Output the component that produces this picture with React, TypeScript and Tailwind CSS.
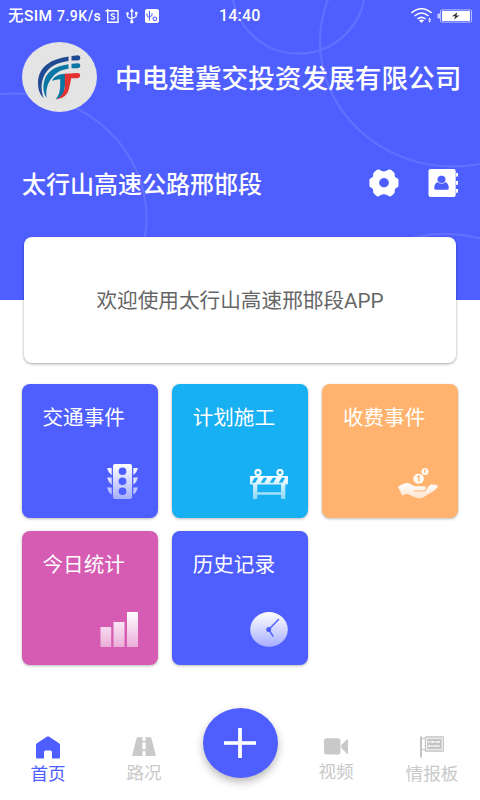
import React from 'react';

function HeaderRings() {
  return (
    <svg className="absolute inset-0" width="480" height="300" viewBox="0 0 480 300" fill="none" stroke="#6270ff" strokeWidth="2.3">
      <ellipse cx="298.5" cy="-12" rx="66.5" ry="65.5" />
      <ellipse cx="453" cy="42" rx="133" ry="124.5" />
      <ellipse cx="13.5" cy="218" rx="133" ry="124.5" />
      <ellipse cx="445" cy="358.5" rx="133" ry="124.5" />
    </svg>
  );
}

function StatusBar() {
  return (
    <div className="relative flex h-8 items-center text-white">
      <div className="flex h-8 w-[219px] items-center pl-2 font-[Roboto,'Noto_Sans_CJK_SC',sans-serif] font-medium">
        <span className="w-[49px] whitespace-nowrap pt-px text-[15.5px] tracking-[0.4px]">无SIM</span>
        <span className="w-[48px] whitespace-nowrap text-[14px] tracking-[0.5px]">7.9K/s</span>
        <svg width="56" height="16" viewBox="105 7 56 16" fill="none" stroke="#fff">
          <path d="M105.5 9.7H118V21.3H107.7V8" strokeWidth="1.4" />
          <path d="M114.9 13.6C114.4 12.5 111 12.4 111 14.1C111 15.8 114.9 14.8 114.9 16.8C114.9 18.6 111.4 18.5 110.8 17.2" strokeWidth="1.2" />
          <path d="M131.8 9.5V20M127.5 12.5V15.3Q127.5 16.5 131.8 18M136.2 12V15Q136.2 16.3 131.8 17.2" strokeWidth="1.3" />
          <path d="M129.8 10.8L131.8 7.3L133.8 10.8Z" fill="#fff" stroke="none" />
          <circle cx="131.8" cy="20.8" r="1.7" fill="#fff" stroke="none" />
          <circle cx="127.5" cy="12.6" r="1.3" fill="#fff" stroke="none" />
          <path d="M135 10.8h2.5v2.5h-2.5z" fill="#fff" stroke="none" />
          <rect x="145" y="8" width="14" height="14" rx="2" fill="#fff" stroke="none" />
          <path d="M149.5 10V19.5M147 12.5V15L149.5 16.8M152 12.2V14.5L149.5 15.8" stroke="#4e5eff" strokeWidth="1" />
          <circle cx="154.8" cy="17.8" r="1.8" stroke="#4e5eff" strokeWidth="1.1" />
        </svg>
      </div>
      <span className="w-[191px] font-[Roboto,sans-serif] text-[16px] font-medium tracking-[0.2px]">14:40</span>
      <svg width="62" height="18" viewBox="410 6 62 18" fill="none">
        <g stroke="#fff" strokeWidth="1.6">
          <path d="M411.4 11.8Q421.5 3.7 431.6 11.8" />
          <path d="M414.5 15Q421.5 9 428.5 15" />
          <path d="M417.5 18Q421.5 14.6 425.5 18" />
        </g>
        <path d="M418.9 19.2Q421.5 17.6 424.1 19.2L421.5 22Z" fill="#fff" />
        <path d="M428.2 18.8L429.6 16.6L431 18.8ZM428.2 19.6L429.6 21.8L431 19.6Z" fill="#fff" />
        <rect x="437.5" y="12.5" width="3" height="5" rx="1" fill="#c9ceff" />
        <rect x="440.5" y="8.9" width="31" height="12.2" rx="1.2" stroke="#bcc2ff" strokeWidth="1" />
        <rect x="442" y="10" width="28" height="10" fill="#fff" />
        <path d="M457.5 11.3L452 15.3H455.3L454 18.4L459.5 14.4H456.3Z" fill="#333" />
      </svg>
    </div>
  );
}

function Logo() {
  return (
    <svg width="75" height="70" viewBox="22 42 75 70" className="shrink-0">
      <ellipse cx="59.5" cy="77" rx="37.5" ry="35" fill="#e4e4e5" />
      <path d="M68.5 56.5C50 59 40 67 38.2 79C37.3 88 39.5 94 43.6 98.2C40.5 89 41 81 45 74C49.5 66.7 57 62.5 68.5 61Z" fill="#204a91" />
      <path d="M71.5 56L78 55.3Q80.3 55.4 80.3 57.7Q80.3 60.4 77.5 60.5H71.5Z" fill="#204a91" />
      <path d="M68.5 64.3C54 66 46.5 73 44.5 80C42.5 87 43.3 93 46.5 98C45.8 90 47.2 84 51 79C55 73 60.5 69.7 68.5 68.7Z" fill="#0b76a4" />
      <path d="M71.5 63.8L78 63.2Q80.3 63.4 80.3 65.3Q80.3 68 77.5 68.2H71.5Z" fill="#0b76a4" />
      <path d="M65.5 73.7C59 74 54.5 75.6 52 80.8Q56 79.3 60.2 79.3V86C60 92 58.5 96 55.5 99.5Q61 98 64 93L66.5 73.7Z" fill="#0b76a4" />
      <path d="M64.8 73.7L77.5 73Q80.2 73.2 80.2 75.7Q80 78 77.2 78.3H71.3L68.8 89.5Q66.8 97.8 56.5 99.6C61.3 97.2 64 92.5 64.9 87Z" fill="#e33232" />
    </svg>
  );
}

function GearIcon() {
  return (
    <svg width="30" height="28" viewBox="0 0 30 28">
      <path fillRule="evenodd" fill="#fff" d="M7.6 1.1Q8.6 .3 9.7 .6L12 1.6Q14.9 3.3 17.8 1.6L20.1 .6Q21.3 .3 22.3 1.1L25 3.4Q26 4.3 25.6 5.6Q25.4 7.9 27.6 9L28.7 9.5Q29.5 10 29.5 11V16.6Q29.5 17.7 28.6 18.2L27.4 18.8Q25.3 20 25.7 22.2Q26 23.6 25 24.5L22.4 26.9Q21.4 27.7 20.2 27.2L18 26.1Q14.9 24.5 11.9 26.1L9.7 27.2Q8.5 27.7 7.5 26.9L4.9 24.5Q3.9 23.6 4.2 22.2Q4.6 20 2.5 18.8L1.3 18.2Q.4 17.7 .4 16.6V11Q.4 10 1.2 9.5L2.3 9Q4.5 7.9 4.3 5.6Q3.9 4.3 4.9 3.4ZM15 9.1A4.9 4.7 0 1 0 15 18.5A4.9 4.7 0 1 0 15 9.1Z" />
    </svg>
  );
}

function ContactIcon() {
  return (
    <svg width="30" height="28" viewBox="0 0 30 28">
      <rect x=".5" y="0" width="27.2" height="28" rx="2" fill="#fff" />
      <path d="M28 4h2v3.5h-2zM28 12h2v3.7h-2zM28 20h2v3.7h-2z" fill="#fff" />
      <path d="M8 20.8Q5.9 20.8 6.2 18.8Q6.7 13.7 9.6 13.2Q13.5 15.8 17.4 13.2Q20.3 13.7 20.8 18.8Q21.1 20.8 19 20.8Z" fill="#4e5eff" />
      <ellipse cx="13.5" cy="10.4" rx="4.3" ry="4" fill="#4e5eff" stroke="#fff" strokeWidth=".5" />
    </svg>
  );
}

function Fade({ id, end }: { id: string; end: number }) {
  return (
    <defs>
      <linearGradient id={id} x1="0" y1="0" x2="0" y2="1">
        <stop offset="0" stopColor="#fff" />
        <stop offset="1" stopColor="#fff" stopOpacity={end} />
      </linearGradient>
    </defs>
  );
}

function TrafficIcon() {
  return (
    <svg width="31" height="35" viewBox="0 0 31 35" fill="url(#traffic)">
      <Fade id="traffic" end={0.5} />
      <path fillRule="evenodd" d="M8 0H23Q25 0 25 2V33Q25 35 23 35H8Q6 35 6 33V2Q6 0 8 0ZM15.5 3.5A3.9 3.8 0 1 0 15.5 11.1A3.9 3.8 0 1 0 15.5 3.5ZM15.5 13.5A3.9 3.8 0 1 0 15.5 21.1A3.9 3.8 0 1 0 15.5 13.5ZM15.5 23.4A3.9 3.8 0 1 0 15.5 31A3.9 3.8 0 1 0 15.5 23.4Z" />
      <g fill="#fff">
        <path d="M0 4H4.7V11.3Q1.4 9 0 4ZM31 4H26.3V11.3Q29.6 9 31 4Z" opacity=".94" />
        <path d="M0 13.5H4.7V20.8Q1.4 18.5 0 13.5ZM31 13.5H26.3V20.8Q29.6 18.5 31 13.5Z" opacity=".8" />
        <path d="M0 23.5H4.7V30.8Q1.4 28.5 0 23.5ZM31 23.5H26.3V30.8Q29.6 28.5 31 23.5Z" opacity=".64" />
      </g>
    </svg>
  );
}

function BarrierIcon() {
  return (
    <svg width="38" height="30" viewBox="0 0 38 30">
      <Fade id="barrier" end={0.5} />
      <circle cx="8" cy="3.5" r="2.6" fill="none" stroke="#fff" strokeWidth="2" />
      <circle cx="30" cy="3.5" r="2.6" fill="none" stroke="#fff" strokeWidth="2" />
      <path fill="url(#barrier)" fillRule="evenodd" d="M1 7H37Q38 7 38 8V14.5Q38 15.5 37 15.5H35.3V30H31V25.8H7.3V30H3V15.5H1Q0 15.5 0 14.5V8Q0 7 1 7ZM7.3 15.5V23.2H31V15.5ZM4.7 8.8L1.7 13.8H5.3L8.3 8.8ZM13.7 8.8L10.7 13.8H14.3L17.3 8.8ZM22.7 8.8L19.7 13.8H23.3L26.3 8.8ZM31.7 8.8L28.7 13.8H32.3L35.3 8.8Z" />
    </svg>
  );
}

function TollIcon() {
  return (
    <svg width="40" height="31" viewBox="0 0 40 31">
      <Fade id="toll" end={0.65} />
      <circle cx="27" cy="3.6" r="3.5" fill="#fff" opacity=".95" />
      <path d="M26 3L27.1 2.1V5.2" stroke="#ffb36e" strokeWidth="1.1" fill="none" />
      <ellipse cx="20.6" cy="10.8" rx="5.3" ry="5" fill="#fff" opacity=".94" />
      <path d="M19.3 9L20.9 7.8V13.5" stroke="#ffb36e" strokeWidth="1.4" fill="none" />
      <path fill="url(#toll)" d="M0 18.5L7 15.2Q10.2 14.4 13 16.3Q15.5 18.6 19 18.3H26Q28.3 18.6 28 20.6Q27.7 22.3 25 22.6H16V23.4H25.5Q29.2 23 29.3 19.8L32.3 16.8Q34.3 15.5 35 17Q37 15.7 37.8 17.3Q40.2 16.8 39.8 18.5Q39 20.6 34 24L25 29.5Q22 31 18.5 30L10 26.2Q7.7 25.5 5.5 27.1L4.2 27.8Z" />
    </svg>
  );
}

function StatsIcon() {
  return (
    <svg width="38" height="35" viewBox="0 0 38 35" fill="url(#stats)">
      <defs>
        <linearGradient id="stats" gradientUnits="userSpaceOnUse" x1="0" y1="0" x2="0" y2="35">
          <stop offset="0" stopColor="#fff" />
          <stop offset="1" stopColor="#fff" stopOpacity=".5" />
        </linearGradient>
      </defs>
      <path d="M.5 15H11.2V35H.5ZM13.5 10H24.5V35H13.5ZM27 0H38V35H27Z" />
    </svg>
  );
}

function ClockIcon() {
  return (
    <svg width="38" height="35" viewBox="0 0 38 35">
      <Fade id="clock" end={0.5} />
      <ellipse cx="19" cy="17.5" rx="18.8" ry="17.4" fill="url(#clock)" />
      <path d="M28.5 7.5L18.7 17.5L23 24.2" fill="none" stroke="#4e5eff" strokeWidth="1.5" strokeLinecap="round" />
      <circle cx="18.7" cy="17.5" r="2.5" fill="#4e5eff" />
    </svg>
  );
}

const tiles = [
  { label: '交通事件', bg: 'bg-[#4e5eff]', icon: <TrafficIcon /> },
  { label: '计划施工', bg: 'bg-[#16b0f3]', icon: <BarrierIcon /> },
  { label: '收费事件', bg: 'bg-[#ffb36e]', icon: <TollIcon /> },
  { label: '今日统计', bg: 'bg-[#d65bb3]', icon: <StatsIcon /> },
  { label: '历史记录', bg: 'bg-[#4e5eff]', icon: <ClockIcon /> },
];

function HomeIcon() {
  return (
    <svg width="24" height="23" viewBox="0 0 24 23">
      <path d="M10.8.7Q12-.2 13.2.7L23 7.2Q24 7.9 24 9V21Q24 22.5 22.5 22.5H16V16Q16 14.4 14.5 14.4H9.5Q8 14.4 8 16V22.5H1.5Q0 22.5 0 21V9Q0 7.9 1 7.2Z" fill="#4e5eff" />
    </svg>
  );
}

function RoadIcon() {
  return (
    <svg width="24" height="19" viewBox="0 0 24 19" fill="#c9c9c9">
      <path d="M6 0H10.4V19H1Q0 19 .2 18L4.7 1Q5 0 6 0ZM18 0H13.6V19H23Q24 19 23.8 18L19.3 1Q19 0 18 0Z" />
      <path d="M10.2 3.7H13.8V5.4H10.2ZM10.2 12.3H13.8V14.3H10.2Z" />
    </svg>
  );
}

function VideoIcon() {
  return (
    <svg width="24" height="17" viewBox="0 0 24 17" fill="#c9c9c9">
      <rect x="0" y=".3" width="16.5" height="16.2" rx="2.5" />
      <path d="M17.3 7L23 1.2Q24 .4 24 1.6V15.3Q24 16.5 23 15.7L17.3 10Z" />
    </svg>
  );
}

function BoardIcon() {
  return (
    <svg width="24" height="22" viewBox="0 0 24 22" fill="none" stroke="#c4c4c4">
      <path d="M1 .5V21.5" strokeWidth="2" />
      <path d="M2 2.5H5M2 13.5H5" strokeWidth="1" />
      <rect x="5.5" y="1" width="18" height="14" rx=".5" strokeWidth="1.4" />
      <rect x="7.2" y="2.7" width="14.6" height="10.6" fill="#c4c4c4" stroke="none" />
      <path d="M8.5 6H20.5M8.5 10H20.5" stroke="#fff" strokeWidth="2" strokeDasharray="2 1" />
      <path d="M9.5 5.5V6.5M12.5 9.5V10.5M15.5 5.5V6.5M18.5 9.5V10.5" strokeWidth="1" />
    </svg>
  );
}

export default function App() {
  return (
    <main className="relative h-[800px] w-[480px] overflow-hidden bg-white font-['Noto_Sans_CJK_SC',sans-serif]">
      <header className="relative h-[300px] overflow-hidden bg-[#4e5eff] text-white">
        <HeaderRings />
        <StatusBar />
        <div className="relative mt-[10px] flex h-[70px] items-center pl-[22px]">
          <Logo />
          <h1 className="ml-[18px] whitespace-nowrap text-[26.65px] leading-[32px] font-medium">中电建冀交投资发展有限公司</h1>
        </div>
        <div className="relative mt-[55px] flex h-8 items-center pl-[22px]">
          <h2 className="w-[347px] text-[24px] leading-[32px] font-medium">太行山高速公路邢邯段</h2>
          <GearIcon />
          <div className="ml-[29px]"><ContactIcon /></div>
        </div>
      </header>

      <section className="relative mx-6 -mt-[63px] flex h-[126px] items-center justify-center rounded-lg bg-white pt-[3px] font-[Roboto,'Noto_Sans_CJK_SC',sans-serif] text-[20.65px] text-[#666] shadow-[0_1px_3px_rgba(0,0,0,0.35)]">
        <span className="whitespace-nowrap">欢迎使用太行山高速邢邯段APP</span>
      </section>

      <section className="mt-[20.75px] grid grid-cols-[136px_136px_136px] gap-x-[14.2px] gap-y-[13.5px] pl-[22px]">
        {tiles.map((tile) => (
          <div key={tile.label} className={`flex h-[134px] flex-col justify-between rounded-lg pt-[17px] pr-5 pb-[18.5px] pl-[20.5px] shadow-[0_1px_3px_rgba(0,0,0,0.28)] ${tile.bg}`}>
            <span className="text-[20.6px] leading-[30px] text-white">{tile.label}</span>
            <div className="flex justify-end">{tile.icon}</div>
          </div>
        ))}
      </section>

      <nav className="mt-[42px] grid h-[93px] grid-cols-5 text-[17.6px] leading-[24px] text-[#c9c9c9]">
        <div className="flex flex-col items-center pt-[28.5px] text-[#4e5eff]">
          <HomeIcon />
          <span className="mt-[2.5px]">首页</span>
        </div>
        <div className="flex flex-col items-center pt-[29.5px]">
          <RoadIcon />
          <span className="mt-[4px]">路况</span>
        </div>
        <div className="flex justify-center">
          <button className="-mx-4 mt-[.5px] flex h-[70px] w-[75px] shrink-0 items-center justify-center rounded-[50%] bg-[#4e5eff] shadow-[0_4px_8px_rgba(0,0,0,0.28)]">
            <svg width="32" height="30" viewBox="0 0 32 30" stroke="#fff">
              <path d="M16 0V30" strokeWidth="3.8" />
              <path d="M0 15H32" strokeWidth="3.6" />
            </svg>
          </button>
        </div>
        <div className="flex flex-col items-center pt-[31px]">
          <VideoIcon />
          <span className="mt-[3.5px]">视频</span>
        </div>
        <div className="flex flex-col items-center pt-[28.5px]">
          <BoardIcon />
          <span className="mt-[3px]">情报板</span>
        </div>
      </nav>
    </main>
  );
}
